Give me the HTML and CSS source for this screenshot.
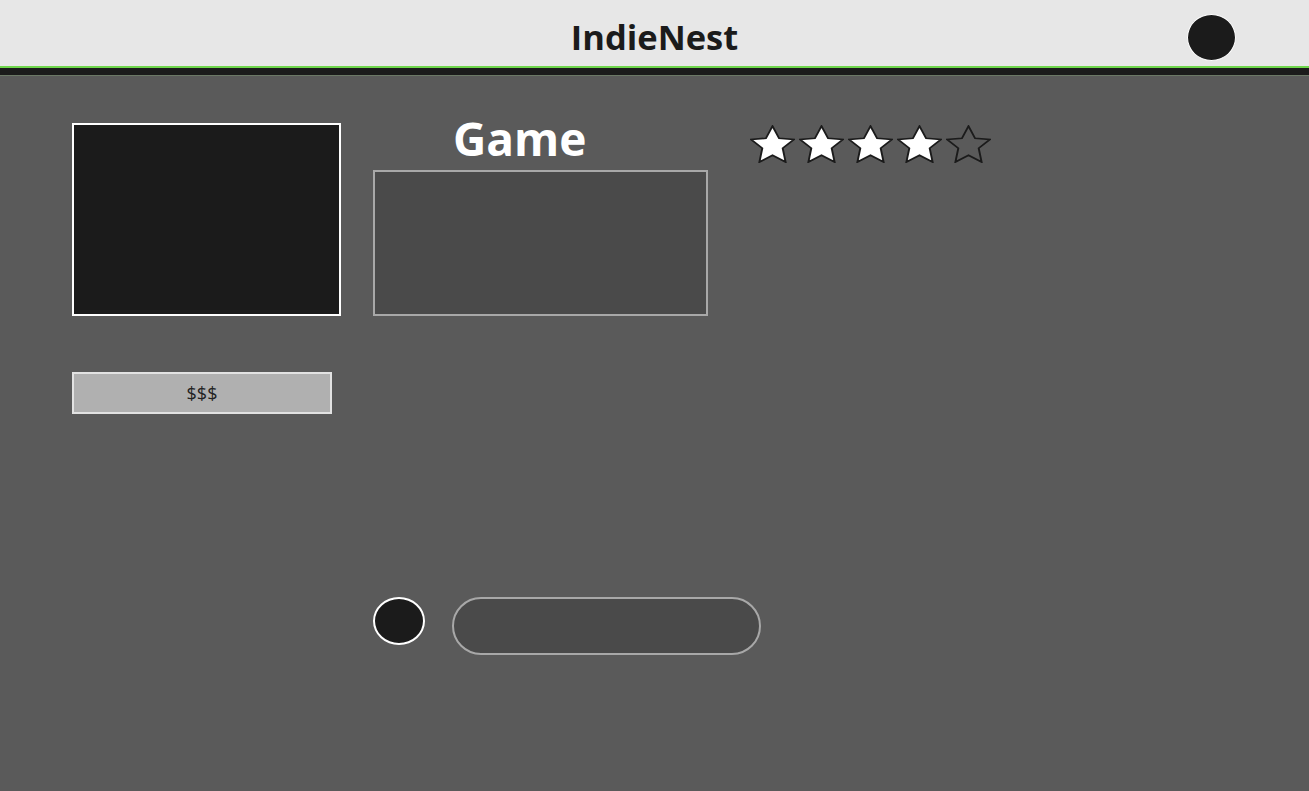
FILE: index.html
```html
<!DOCTYPE html>
<html lang="en">
<head>
    <meta charset="UTF-8">
    <meta name="viewport" content="width=device-width, initial-scale=1.0">
    <title>IndieNest</title>
    <link rel="stylesheet" href="styles.css">
</head>
<body>

    <!-- Top bar -->
    <header class="topbar">
        <div></div>
        <h1 class="brand">IndieNest</h1>
        <div class="profile"></div>
    </header>
    <div class="stripe"></div>

    <main class="page">
        <section class="game-row">
            <!-- cover + price -->
            <div class="side">
                <div class="cover"></div>
                <button class="price">$$$</button>
            </div>

            <!-- title + description -->
            <div class="info">
                <h2 class="game-title">Game</h2>
                <div class="description"></div>
            </div>

            <!-- rating -->
            <div class="rating">
                <svg class="star full" viewBox="1.4 1.4 21.2 20.6" preserveAspectRatio="none"><polygon points="12,2 15.09,8.6 22,9.27 16.8,14 18.18,21.5 12,17.8 5.82,21.5 7.2,14 2,9.27 8.91,8.6"/></svg>
                <svg class="star full" viewBox="1.4 1.4 21.2 20.6" preserveAspectRatio="none"><polygon points="12,2 15.09,8.6 22,9.27 16.8,14 18.18,21.5 12,17.8 5.82,21.5 7.2,14 2,9.27 8.91,8.6"/></svg>
                <svg class="star full" viewBox="1.4 1.4 21.2 20.6" preserveAspectRatio="none"><polygon points="12,2 15.09,8.6 22,9.27 16.8,14 18.18,21.5 12,17.8 5.82,21.5 7.2,14 2,9.27 8.91,8.6"/></svg>
                <svg class="star full" viewBox="1.4 1.4 21.2 20.6" preserveAspectRatio="none"><polygon points="12,2 15.09,8.6 22,9.27 16.8,14 18.18,21.5 12,17.8 5.82,21.5 7.2,14 2,9.27 8.91,8.6"/></svg>
                <svg class="star" viewBox="1.4 1.4 21.2 20.6" preserveAspectRatio="none"><polygon points="12,2 15.09,8.6 22,9.27 16.8,14 18.18,21.5 12,17.8 5.82,21.5 7.2,14 2,9.27 8.91,8.6"/></svg>
            </div>
        </section>

        <!-- comment box -->
        <section class="comment">
            <div class="avatar"></div>
            <input type="text" class="comment-input">
        </section>
    </main>

</body>
</html>
```

FILE: styles.css
```css
* {
    box-sizing: border-box;
}

body {
    font-family: "Open Sans", Arial, sans-serif;
    background-color: #5a5a5a;
    margin: 0;
    padding: 0;
    min-height: 791px;
}

.topbar {
    height: 68px;
    padding-top: 8px;
    background-color: #e7e7e7;
    border-bottom: 2px solid #6fd64c;
    display: grid;
    grid-template-columns: 1fr auto 1fr;
    align-items: center;
}

.brand {
    margin: 0;
    font-size: 34.5px;
    font-weight: 700;
    color: #1b1b1b;
    line-height: 1;
}

.profile {
    justify-self: end;
    margin-right: 73px;
    width: 49px;
    height: 47px;
    border-radius: 50%;
    background-color: #1b1b1b;
    border: 1px solid #fff;
}

.stripe {
    height: 8px;
    background-color: #1b1b1b;
    border-bottom: 1px solid #6b7866;
}

.page {
    padding: 47px 0 0 72px;
}

.game-row {
    display: flex;
    align-items: flex-start;
}

.side {
    width: 269px;
    display: flex;
    flex-direction: column;
}

.cover {
    width: 269px;
    height: 193px;
    background-color: #1b1b1b;
    border: 2px solid #fff;
}

.price {
    margin-top: 56px;
    width: 260px;
    height: 42px;
    background-color: #b0b0b0;
    border: 2px solid #e2e2e2;
    font-family: "Open Sans", Arial, sans-serif;
    font-size: 18px;
    color: #222;
    cursor: pointer;
}

.info {
    margin-left: 32px;
    width: 335px;
}

.game-title {
    margin: 0 0 0 80px;
    height: 47px;
    font-size: 46px;
    font-weight: 700;
    color: #fff;
    line-height: 30px;
}

.description {
    width: 335px;
    height: 146px;
    background-color: #4a4a4a;
    border: 2px solid #a8a8a8;
}

.rating {
    margin-left: 42px;
    padding-top: 2px;
    display: flex;
    gap: 4px;
}

.star {
    width: 45px;
    height: 38px;
}

.star polygon {
    fill: none;
    stroke: #1b1b1b;
    stroke-width: 0.9;
    stroke-linejoin: miter;
}

.star.full polygon {
    fill: #fff;
}

.comment {
    margin-top: 183px;
    padding-left: 301px;
    display: flex;
    align-items: flex-start;
    gap: 27px;
}

.avatar {
    width: 52px;
    height: 48px;
    border-radius: 50%;
    background-color: #1b1b1b;
    border: 2px solid #fff;
}

.comment-input {
    width: 309px;
    height: 58px;
    border-radius: 29px;
    background-color: #4a4a4a;
    border: 2px solid #a8a8a8;
    outline: none;
}
```
